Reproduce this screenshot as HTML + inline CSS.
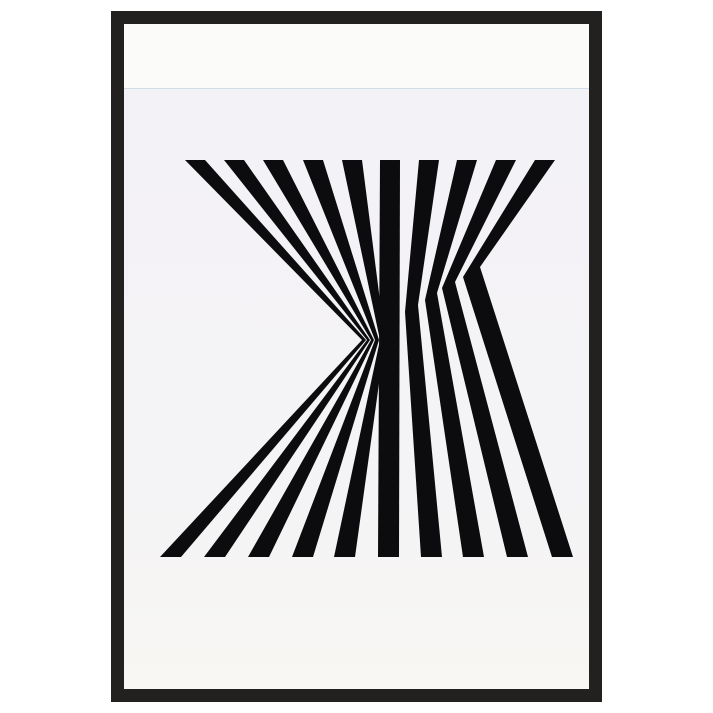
<!DOCTYPE html>
<html><head><style>
html,body{margin:0;padding:0;background:#fff;width:713px;height:713px;overflow:hidden}
</style></head><body>
<svg width="713" height="713" viewBox="0 0 713 713" xmlns="http://www.w3.org/2000/svg">
<defs>
<linearGradient id="p" x1="0" y1="0" x2="0" y2="1">
<stop offset="0" stop-color="#f3f2f6"/>
<stop offset="0.7" stop-color="#f4f3f5"/>
<stop offset="1" stop-color="#f8f7f3"/>
</linearGradient>
</defs>
<rect x="111" y="11" width="491" height="691" fill="#222120"/>
<rect x="124" y="24" width="465" height="665" fill="url(#p)"/>
<rect x="124" y="24" width="465" height="64" fill="#fbfbf9"/>
<rect x="124" y="88" width="465" height="1" fill="#cfdde6"/>
<g fill="#0c0c0e">
<polygon points="185,160 205,160 366,340 181,557 160,557 362,340"/>
<polygon points="224,160 244,160 370,340 225,557 204,557 367,340"/>
<polygon points="263,160 283,160 374,340 269,557 248,557 371,340"/>
<polygon points="303,160 323,160 379,340 313,557 292,557 375,340"/>
<polygon points="342,160 362,160 385,340 355,557 334,557 380,340"/>
<polygon points="380,160 400,160 399,557 378,557"/>
<polygon points="419,160 439,160 418,305 442,557 421,557 405,312"/>
<polygon points="457,160 477,160 437,293 484,557 463,557 425,300"/>
<polygon points="496,160 516,160 455,282 528,557 507,557 442,288"/>
<polygon points="535,160 555,160 480,267 573,557 552,557 463,277"/>
</g>
</svg>
</body></html>
